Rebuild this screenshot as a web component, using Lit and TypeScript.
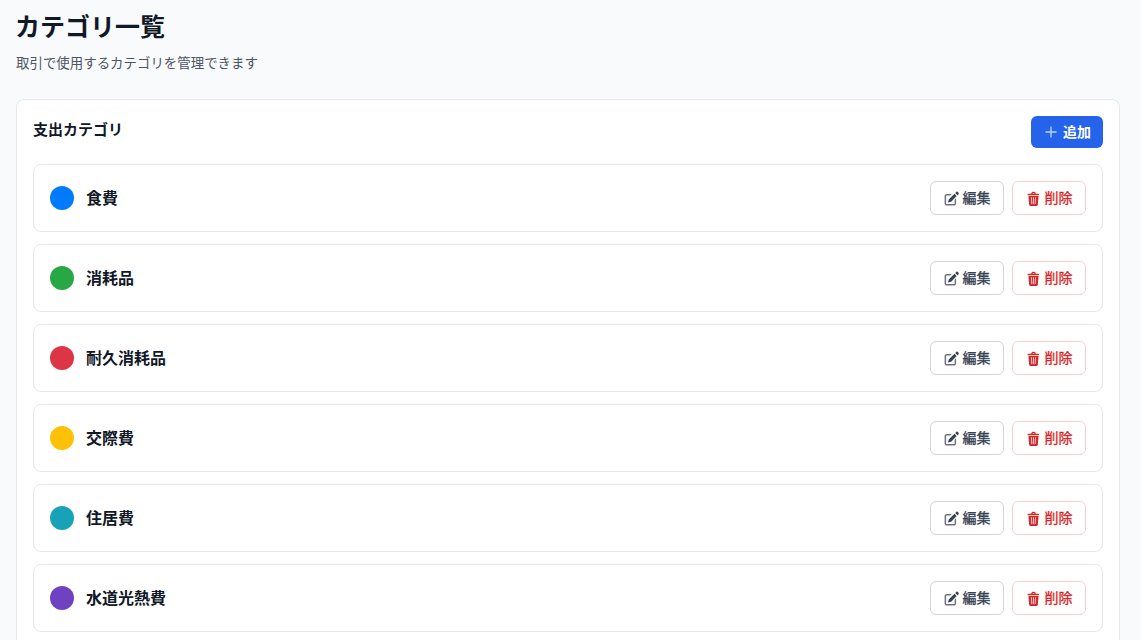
import { LitElement, html, css, svg } from "lit";
import { customElement } from "lit/decorators.js";

const CATEGORIES = [
  { name: "食費", color: "#007bff" },
  { name: "消耗品", color: "#28a745" },
  { name: "耐久消耗品", color: "#dc3545" },
  { name: "交際費", color: "#ffc107" },
  { name: "住居費", color: "#17a2b8" },
  { name: "水道光熱費", color: "#6f42c1" },
];

const editIcon = svg`<path fill="#6b7280" fill-rule="evenodd" d="M.6 5.200C.6 4 1.500 3.100 2.700 3.100H7.800L6.400 4.600H2.700c-.4 0-.6.2-.6.6v7.200c0 .4.2.6.6.6h7.300c.4 0 .6-.2.6-.6V8.800l1.500-1.500v5.100c0 1.200-.9 2.100-2.100 2.100H2.700c-1.200 0-2.100-.9-2.100-2.100z"/><path d="M12.300.9c.4-.4 1-.4 1.400 0l.9.9c.4.4.4 1 0 1.400L13.500 4.300 11.200 2zM10.400 2.800l2.300 2.300-5.600 5.600-3.100.8.800-3.100z"/>`;
const trashIcon = svg`<path d="M5.300 2.300C5.500 1.300 6.300.7 7.200.7h.6c.9 0 1.700.6 1.900 1.600l.1.4h2.700c.5 0 .7.300.7.700s-.2.8-.7.8H2.200c-.5 0-.7-.4-.7-.8s.2-.7.7-.7h2.700zm1.200.4h2c-.1-.5-.4-.8-.9-.8h-.2c-.5 0-.8.300-.9.800z"/><path d="M2.500 5h10l-.6 8.500c-.1.900-.7 1.500-1.600 1.500H4.700c-.9 0-1.500-.6-1.600-1.500z"/><path fill="none" stroke="#fff" stroke-width=".8" stroke-linecap="round" d="M5.500 6.700l.3 6M7.500 6.700v6M9.500 6.700l-.3 6"/>`;

@customElement("app-root")
export class AppRoot extends LitElement {
  static styles = css`
    :host {
      display: block;
      height: 640px;
      overflow: hidden;
      background: #f9fafb;
      font-family: "Noto Sans CJK JP", sans-serif;
      color: #111827;
    }
    .page {
      padding: 0 21px 0 16px;
    }
    h1 {
      margin: 0 0 0 -1px;
      padding-top: 5px;
      font-size: 25px;
      line-height: 40px;
      font-weight: 700;
      color: #111827;
    }
    .subtitle {
      margin: 6px 0 0;
      font-size: 13.44px;
      line-height: 22px;
      color: #4b5563;
    }
    .card {
      margin-top: 26px;
      background: #fff;
      border: 1px solid #e5e7eb;
      border-radius: 8px;
      padding: 16px;
      box-sizing: border-box;
    }
    .card-head {
      display: flex;
      justify-content: space-between;
      align-items: flex-start;
      margin-bottom: 16px;
    }
    h2 {
      margin: 0;
      font-size: 15px;
      line-height: 28px;
      font-weight: 700;
      color: #111827;
      padding-bottom: 4px;
    }
    h2 span,
    .txt {
      display: block;
    }
    h2 span {
      margin-top: -1px;
    }
    .add {
      display: flex;
      align-items: center;
      gap: 6px;
      height: 32px;
      width: 72px;
      box-sizing: border-box;
      justify-content: center;
      background: #2563eb;
      color: #fff;
      border: none;
      border-radius: 6px;
      font: 700 14px "Noto Sans CJK JP", sans-serif;
      padding: 0 0 0 2px;
    }
    .add svg {
      width: 12px;
      height: 12px;
      stroke: #bfd3fb;
      stroke-width: 1.3;
      fill: none;
    }
    .list {
      display: flex;
      flex-direction: column;
      gap: 12px;
    }
    .row {
      display: flex;
      align-items: center;
      justify-content: space-between;
      height: 68px;
      box-sizing: border-box;
      padding: 0 16px;
      border: 1px solid #e5e7eb;
      border-radius: 8px;
      background: #fff;
    }
    .label {
      display: flex;
      align-items: center;
      gap: 12px;
    }
    .dot {
      width: 24px;
      height: 24px;
      border-radius: 50%;
    }
    .name {
      font-size: 16px;
      line-height: 24px;
      font-weight: 700;
      color: #111827;
      margin-top: -2px;
    }
    .actions {
      display: flex;
      gap: 8px;
    }
    .btn {
      display: flex;
      align-items: center;
      justify-content: center;
      gap: 4px;
      width: 74px;
      height: 34px;
      box-sizing: border-box;
      padding: 0;
      background: #fff;
      border-radius: 6px;
      font: 400 14px "Noto Sans CJK JP", sans-serif;
      -webkit-text-stroke: 0.3px currentColor;
    }
    .btn svg {
      width: 15px;
      height: 15px;
      fill: currentColor;
    }
    .txt {
      line-height: 20px;
      margin-top: -2px;
    }
    .edit {
      border: 1px solid #d1d5db;
      color: #374151;
    }
    .delete {
      border: 1px solid #fecaca;
      color: #dc2626;
    }
  `;

  render() {
    return html`
      <div class="page">
        <h1>カテゴリ一覧</h1>
        <p class="subtitle">取引で使用するカテゴリを管理できます</p>
        <section class="card">
          <div class="card-head">
            <h2><span>支出カテゴリ</span></h2>
            <button class="add">
              <svg viewBox="0 0 12 12"><path d="M6 .5v11M.5 6h11" /></svg><span class="txt">追加</span>
            </button>
          </div>
          <div class="list">
            ${CATEGORIES.map(
              (c) => html`
                <div class="row">
                  <div class="label">
                    <span class="dot" style="background:${c.color}"></span>
                    <span class="name">${c.name}</span>
                  </div>
                  <div class="actions">
                    <button class="btn edit"><svg viewBox="0 0 15 15">${editIcon}</svg><span class="txt">編集</span></button>
                    <button class="btn delete"><svg viewBox="0 0 15 15">${trashIcon}</svg><span class="txt">削除</span></button>
                  </div>
                </div>
              `
            )}
          </div>
        </section>
      </div>
    `;
  }
}
